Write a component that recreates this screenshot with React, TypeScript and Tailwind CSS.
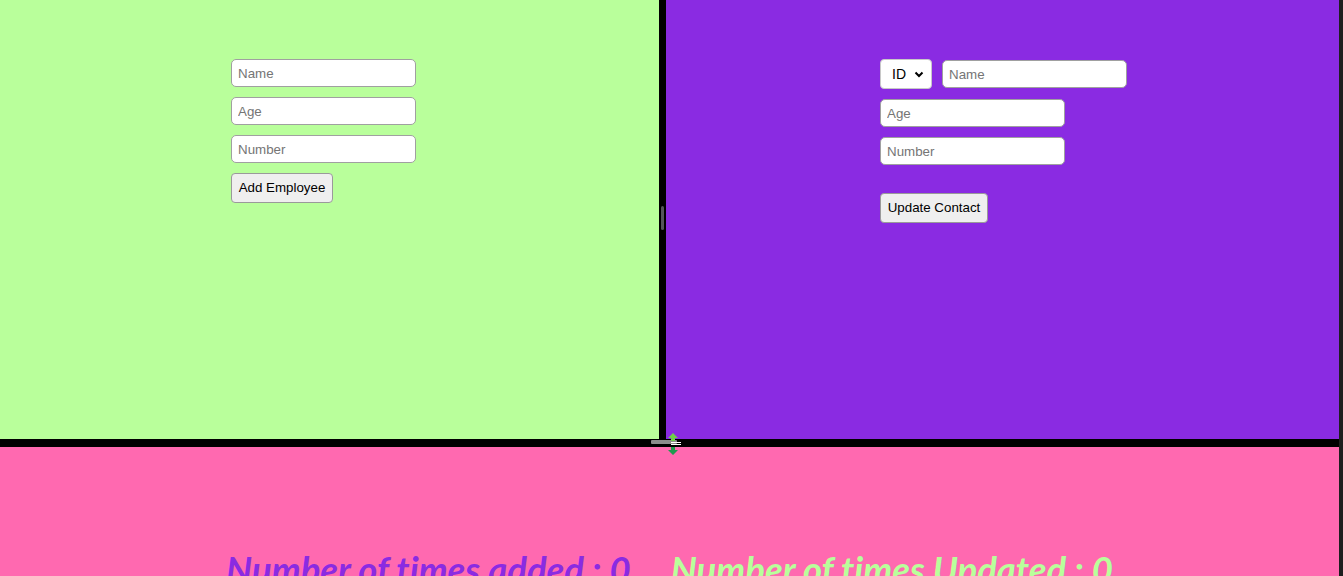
import React from "react"

const inputCls =
  "block w-[185px] h-[28px] bg-white border border-[#a0a0a0] rounded-[5px] px-[6px] text-[13.33px] text-black placeholder:text-[#757575] outline-none"
const btnCls =
  "block h-[30px] px-[6px] bg-[#efefef] border border-[#9a9a9a] rounded-[4px] text-[13.33px] text-black"

function AddForm() {
  return (
    <div className="pl-[231px] pt-[59px] flex flex-col gap-[10px]">
      <input className={inputCls} placeholder="Name" />
      <input className={inputCls} placeholder="Age" />
      <input className={inputCls} placeholder="Number" />
      <button className={`${btnCls} w-[102px]`}>Add Employee</button>
    </div>
  )
}

function UpdateForm() {
  return (
    <div className="pl-[214px] pt-[59px] flex flex-col">
      <div className="flex items-center gap-[10px]">
        <div className="w-[52px] h-[30px] bg-white border border-[#c8c8c8] rounded-[4px] flex items-center pl-[11px] pr-[7px] justify-between">
          <span className="text-[14px] text-black">ID</span>
          <svg width="10" height="7" viewBox="0 0 10 7">
            <path d="M1.5 1.5 L5 5 L8.5 1.5" fill="none" stroke="#000" strokeWidth="2" />
          </svg>
        </div>
        <input className={inputCls} placeholder="Name" />
      </div>
      <input className={`${inputCls} mt-[10px]`} placeholder="Age" />
      <input className={`${inputCls} mt-[10px]`} placeholder="Number" />
      <button className={`${btnCls} w-[108px] mt-[28px]`}>Update Contact</button>
    </div>
  )
}

export default function App() {
  const counterFont = { fontFamily: 'Lato, "Open Sans", sans-serif' }
  return (
    <div className="w-[1343px] h-[576px] overflow-hidden flex" style={{ fontFamily: '"Liberation Sans", Arial, sans-serif' }}>
      <div className="flex-1 flex flex-col min-h-0">
        <div className="h-[439px] shrink-0 flex">
          <div className="w-[659px] bg-[#b9ff9b]">
            <AddForm />
          </div>
          <div className="w-[7px] bg-black flex items-start justify-center pt-[206px]">
            <div className="w-[3px] h-[24px] rounded-full bg-[#55555a]" />
          </div>
          <div className="flex-1 bg-[#8a2be2]">
            <UpdateForm />
          </div>
        </div>
        <div className="relative h-[8px] shrink-0 bg-black">
          <div className="absolute left-[651px] top-[1px] w-[26px] h-[4px] rounded-[1px] bg-[#8c8c8c]" />
          <svg className="absolute left-[664px] top-[-7px]" width="18" height="24" viewBox="0 0 18 24">
            <path d="M9 1 L4 6 H7 V9 H11 V6 H14 Z" fill="#6fd14a" />
            <path d="M7 10.5 H17 M7 12.5 H17" stroke="#fff" strokeWidth="1" />
            <path d="M9 23 L4 18 H7 V15 H11 V18 H14 Z" fill="#1f9a4e" />
          </svg>
        </div>
        <div className="flex-1 shrink-0 bg-[#ff69b0] flex justify-center gap-[40px] pt-[100px] whitespace-nowrap [font-variant-ligatures:none]">
          <span className="text-[36.5px] font-bold italic text-[#8a2be2] leading-[44px]" style={counterFont}>
            Number of times added : 0
          </span>
          <span className="text-[36.5px] font-bold italic text-[#b9ff9b] leading-[44px]" style={counterFont}>
            Number of times Updated : 0
          </span>
        </div>
      </div>
      <div className="w-[4px] bg-[#1e1e1e]" />
    </div>
  )
}
